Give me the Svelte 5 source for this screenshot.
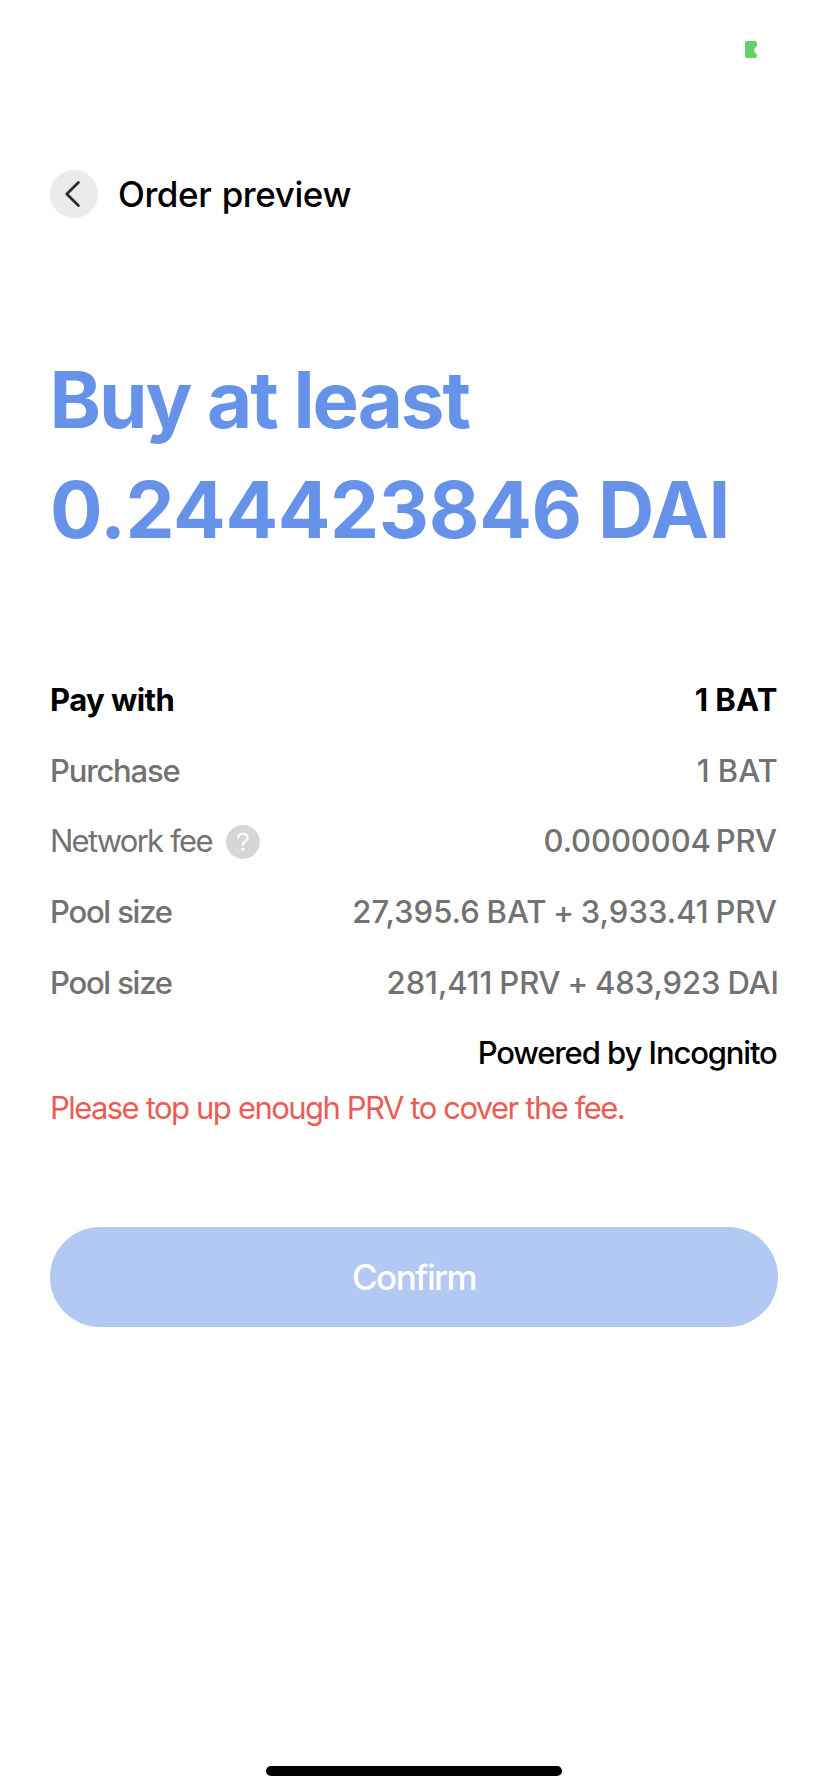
<script>
  const rows = [
    { label: 'Pay with', value: '1 BAT', strong: true, ls: -0.55, vls: 0.3, vws: -0.8, vm: 0.3 },
    { label: 'Purchase', value: '1 BAT', ls: -1.18, vls: 0.15, vws: -0.5, vm: 0 },
    { label: 'Network fee', value: '0.0000004 PRV', help: true, ls: -1.75, ws: 1, vls: -0.1, vws: -3.2, vm: 1.1 },
    { label: 'Pool size', value: '27,395.6 BAT + 3,933.41 PRV', ls: -1.27, ws: 0.3, vls: 0.06, vws: -1.6, vm: 1 },
    { label: 'Pool size', value: '281,411 PRV + 483,923 DAI', ls: -1.27, ws: 0.3, vls: -0.06, vws: -1.25, vm: -0.9 }
  ];
</script>

<main class="screen">
  <div class="status">
    <svg class="battery" width="12" height="17" viewBox="0 0 12 17" aria-hidden="true">
      <path d="M2 0H10Q12 0 12 2V5.6Q9.2 6.7 9.2 9.4Q9.2 12 12 13.2V15Q12 17 10 17H2Q0 17 0 15V2Q0 0 2 0Z" fill="#65cf68" />
    </svg>
  </div>

  <header>
    <button class="back" aria-label="Back">
      <svg width="48" height="48" viewBox="0 0 48 48" fill="none" stroke="#2d2d2d" stroke-width="2.8" stroke-linecap="round" stroke-linejoin="round">
        <path d="M28.4 12.6L16.8 24L28.4 35.4" />
      </svg>
    </button>
    <span class="title">Order preview</span>
  </header>

  <h1>
    <span class="lead">Buy at least</span>
    <span class="amount">0.244423846 DAI</span>
  </h1>

  <section class="details">
    {#each rows as row}
      <div class="row" class:strong={row.strong} class:light={row.help}>
        <span class="label" style="letter-spacing:{row.ls}px;word-spacing:{row.ws ?? 0}px">{row.label}</span>
        {#if row.help}
          <svg class="help" width="34" height="34" viewBox="0 0 34 34" aria-hidden="true">
            <circle cx="17" cy="17" r="16.9" fill="#d6d6d6" />
            <path d="M12.3 12.7C12.4 10.2 14.3 8.8 17 8.8C19.8 8.8 21.6 10.4 21.6 12.6C21.6 14.4 20.6 15.4 19.1 16.4C17.5 17.4 17 18.1 17 19.8" fill="none" stroke="#fff" stroke-width="2.2" stroke-linecap="round" />
            <circle cx="16.9" cy="24.2" r="1.6" fill="#fff" />
          </svg>
        {/if}
        <span class="value" style="letter-spacing:{row.vls}px;word-spacing:{row.vws}px;margin-right:{row.vm}px">{row.value}</span>
      </div>
    {/each}
    <div class="row powered"><span class="value">Powered by Incognito</span></div>
  </section>

  <p class="error">Please top up enough PRV to cover the fee.</p>

  <button class="confirm"><span>Confirm</span></button>

  <div class="home"></div>
</main>

<style>
  :global(body) { margin: 0; background: #fff; }
  .screen {
    box-sizing: border-box;
    width: 828px;
    height: 1792px;
    padding: 0 50px 16px;
    display: flex;
    flex-direction: column;
    background: #fff;
    color: #000;
    font-family: Inter, "Liberation Sans", sans-serif;
    white-space: nowrap;
    overflow: hidden;
  }
  button { border: 0; padding: 0; font-family: inherit; }
  .status {
    box-sizing: border-box;
    height: 170px;
    padding: 41px 21px 0 0;
    display: flex;
    justify-content: flex-end;
    align-items: flex-start;
  }
  .battery, .back svg, .help { display: block; }
  header { display: flex; align-items: center; height: 48px; }
  .back { width: 48px; height: 48px; border-radius: 50%; background: #ebebeb; }
  .title { margin-left: 20px; font-size: 35px; font-weight: 500; letter-spacing: -0.42px; word-spacing: 1.4px; line-height: 48px; }
  h1 {
    margin: 126.5px 0 0;
    display: flex;
    flex-direction: column;
    font-size: 78px;
    font-weight: 700;
    line-height: 110px;
    color: #6693e9;
  }
  .lead { margin-left: -0.5px; letter-spacing: -2.1px; word-spacing: 0.4px; }
  .amount { letter-spacing: -0.4px; word-spacing: -1.8px; }
  .details { margin-top: 100.3px; }
  .row {
    display: flex;
    align-items: center;
    height: 70.67px;
    font-size: 31px;
    font-weight: 500;
    line-height: 40px;
    color: #727272;
  }
  .strong { color: #000; font-weight: 700; }
  .light .label { font-weight: 400; }
  .help { margin: 2px 0 0 14.7px; }
  .value { margin-left: auto; }
  .powered { color: #000; }
  .powered .value { letter-spacing: -1.15px; word-spacing: 0.3px; margin-right: 1.4px; }
  .error {
    margin: -0.5px 0 0;
    font-size: 31px;
    line-height: 40px;
    letter-spacing: -1.57px;
    word-spacing: 0.5px;
    color: #ea5d55;
  }
  .confirm {
    margin-top: 98.7px;
    height: 100px;
    flex: none;
    border-radius: 50px;
    background: #b2c9f3;
    color: #fff;
    font-size: 35px;
    font-weight: 500;
    letter-spacing: -1.59px;
    line-height: 100px;
  }
  .home { margin: auto auto 0; width: 296px; height: 10px; border-radius: 5px; background: #000; }
</style>
